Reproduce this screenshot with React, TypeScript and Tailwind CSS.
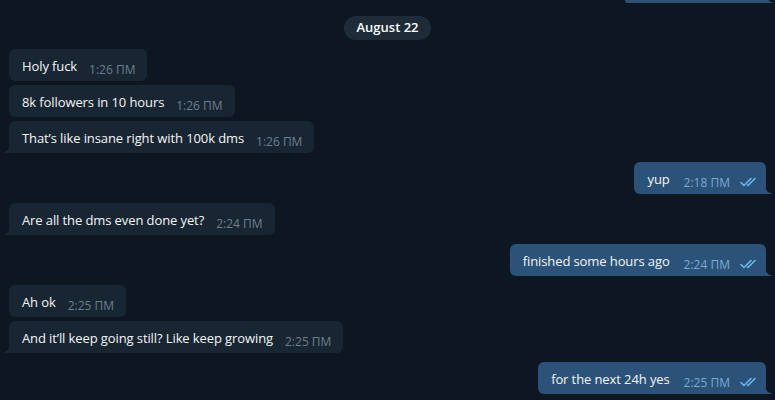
import React from "react";

type Msg = {
  text: string;
  time: string;
  out?: boolean;
  tail?: boolean;
  gap: string;
};

const messages: Msg[] = [
  { text: "Holy fuck", time: "1:26 ПМ", gap: "mt-[9px]" },
  { text: "8k followers in 10 hours", time: "1:26 ПМ", gap: "mt-[4px]" },
  { text: "That’s like insane right with 100k dms", time: "1:26 ПМ", tail: true, gap: "mt-[4px]" },
  { text: "yup", time: "2:18 ПМ", out: true, tail: true, gap: "mt-[9px]" },
  { text: "Are all the dms even done yet?", time: "2:24 ПМ", tail: true, gap: "mt-[9px]" },
  { text: "finished some hours ago", time: "2:24 ПМ", out: true, tail: true, gap: "mt-[9px]" },
  { text: "Ah ok", time: "2:25 ПМ", gap: "mt-[9px]" },
  { text: "And it’ll keep going still? Like keep growing", time: "2:25 ПМ", tail: true, gap: "mt-[4px]" },
  { text: "for the next 24h yes", time: "2:25 ПМ", out: true, tail: true, gap: "mt-[9px]" },
];

function Checks() {
  return (
    <svg width="17" height="10" viewBox="0 0 17 10" fill="none" className="ml-[10px] -translate-y-[1px]">
      <path d="M1 5.5 L4 8.5 L11 1.5" stroke="#6ab7f0" strokeWidth="1.6" strokeLinecap="round" strokeLinejoin="round" />
      <path d="M7.5 8 L8 8.5 L15 1.5" stroke="#6ab7f0" strokeWidth="1.6" strokeLinecap="round" strokeLinejoin="round" />
    </svg>
  );
}

function Tail({ out, color }: { out?: boolean; color: string }) {
  if (out) {
    return (
      <svg width="8" height="10" viewBox="0 0 8 10" className="absolute bottom-0 -right-[7px]">
        <path d="M0 0 C0 6 3 9 8 10 L0 10 Z" fill={color} />
      </svg>
    );
  }
  return (
    <svg width="8" height="10" viewBox="0 0 8 10" className="absolute bottom-0 -left-[7px]">
      <path d="M8 0 C8 6 5 9 0 10 L8 10 Z" fill={color} />
    </svg>
  );
}

function Bubble({ m }: { m: Msg }) {
  const bg = m.out ? "#2b5278" : "#182533";
  return (
    <div className={`flex ${m.out ? "justify-end pr-[9px]" : "pl-[9px]"} ${m.gap}`}>
      <div
        className={`relative flex items-end h-[32px] pt-[8px] pb-[6px] pl-[13px] ${m.out ? "pr-[9px] bg-[#2b5278]" : "pr-[12px] bg-[#182533]"} rounded-[6px] ${
          m.tail ? (m.out ? "rounded-br-none" : "rounded-bl-none") : ""
        }`}
      >
        <span className="text-[13px] leading-[18px] tracking-[-0.1px] text-[#f5f5f5]">{m.text}</span>
        <span
          className={`text-[12px] leading-[14px] translate-y-[2px] ${m.out ? "ml-[14px] text-[#7da8d3]" : "ml-[12px] text-[#6d7f8f]"}`}
        >
          {m.time}
        </span>
        {m.out && <Checks />}
        {m.tail && <Tail out={m.out} color={bg} />}
      </div>
    </div>
  );
}

export default function App() {
  return (
    <div
      className="w-[775px] h-[400px] overflow-hidden bg-[#0e1621]"
      style={{ fontFamily: '"Open Sans", "Noto Sans", sans-serif' }}
    >
      <div className="flex justify-end pr-[8px]">
        <div className="relative h-[3px] w-[142px] bg-[#2b5278] rounded-bl-[3px]">
          <Tail out color="#2b5278" />
        </div>
      </div>
      <div className="flex justify-center mt-[13px]">
        <div className="h-[24px] px-[12px] rounded-full bg-[#1e2c3a] flex items-center text-[13px] font-semibold text-white">
          August 22
        </div>
      </div>
      {messages.map((m, i) => (
        <Bubble key={i} m={m} />
      ))}
    </div>
  );
}
